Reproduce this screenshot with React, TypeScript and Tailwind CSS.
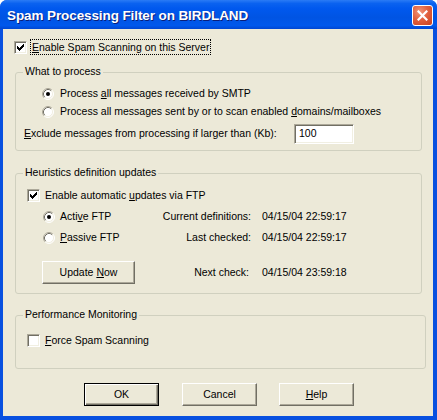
import React from "react";

const font = { fontFamily: '"Liberation Sans", Arial, sans-serif' };

function Check({ checked }: { checked?: boolean }) {
  return (
    <span className="flex items-center justify-center w-[13px] h-[13px] shrink-0 bg-white border border-t-[#ACA899] border-l-[#ACA899] border-r-white border-b-white shadow-[inset_1px_1px_0_#716F64,inset_-1px_-1px_0_#F1EFE2]">
      {checked && (
        <svg width="7" height="7" viewBox="0 0 7 7" shapeRendering="crispEdges">
          <path
            fill="#000"
            d="M6 0h1v1h-1z M5 1h2v1h-2z M0 2h1v1h-1z M4 2h3v1h-3z M0 3h2v1h-2z M3 3h3v1h-3z M0 4h5v1h-5z M1 5h3v1h-3z M2 6h1v1h-1z"
          />
        </svg>
      )}
    </span>
  );
}

function Radio({ checked }: { checked?: boolean }) {
  return (
    <svg width="12" height="12" viewBox="0 0 12 12" className="shrink-0">
      <circle cx="6" cy="6" r="5" fill="#fff" />
      <path d="M2.11 9.89 A5.5 5.5 0 0 1 9.89 2.11" stroke="#ACA899" strokeWidth="1" fill="none" />
      <path d="M2.82 9.18 A4.5 4.5 0 0 1 9.18 2.82" stroke="#716F64" strokeWidth="1" fill="none" />
      <path d="M9.89 2.11 A5.5 5.5 0 0 1 2.11 9.89" stroke="#fff" strokeWidth="1" fill="none" />
      <path d="M9.18 2.82 A4.5 4.5 0 0 1 2.82 9.18" stroke="#F1EFE2" strokeWidth="1" fill="none" />
      {checked && <circle cx="6" cy="6" r="2" fill="#000" />}
    </svg>
  );
}

function Group({ title, className, children }: { title: string; className: string; children: React.ReactNode }) {
  return (
    <div className={`relative ml-[12px] border border-[#D0D0BF] rounded-[3px] ${className}`}>
      <span className="absolute -top-[8px] left-[7px] px-[2px] leading-[13px] bg-[#ECE9D8]">{title}</span>
      {children}
    </div>
  );
}

function Btn({ children, def, className = "" }: { children: React.ReactNode; def?: boolean; className?: string }) {
  return (
    <button
      className={`w-[75px] h-[23px] flex items-center justify-center bg-[#ECE9D8] text-black ${
        def
          ? "border border-black shadow-[inset_1px_1px_0_#fff,inset_-1px_-1px_0_#716F64,inset_-2px_-2px_0_#ACA899]"
          : "border border-t-white border-l-white border-r-[#716F64] border-b-[#716F64] shadow-[inset_-1px_-1px_0_#ACA899]"
      } ${className}`}
    >
      {children}
    </button>
  );
}

export default function App() {
  return (
    <div className="w-[437px] h-[420px] bg-white" style={font}>
      <div className="w-full h-full flex flex-col bg-[#0850E0] rounded-t-[7px] overflow-hidden text-[10.5px] text-black">
        {/* title bar */}
        <div className="h-[29px] shrink-0 flex items-center bg-[linear-gradient(to_bottom,#2A7BF5_0%,#0A62F0_12%,#0058EE_30%,#0054E3_60%,#0058EC_88%,#0046D2_100%)]">
          <span className="ml-[7px] mt-[3px] text-white font-bold text-[13.5px] tracking-[-0.1px] [text-shadow:1px_1px_0_#0A1E7A]">
            Spam Processing Filter on BIRDLAND
          </span>
          <span className="ml-auto mr-[4px] mt-[2px] w-[21px] h-[21px] rounded-[3px] border border-white bg-[radial-gradient(circle_at_35%_30%,#F2967A_0%,#E2613F_45%,#C9401E_100%)] flex items-center justify-center">
            <svg width="11" height="11" viewBox="0 0 11 11">
              <path d="M1.5 1.5 L9.5 9.5 M9.5 1.5 L1.5 9.5" stroke="#fff" strokeWidth="2.2" strokeLinecap="square" />
            </svg>
          </span>
        </div>

        {/* body */}
        <div className="flex-1 ml-[3px] mr-[4px] mb-[4px] bg-[#ECE9D8] flex flex-col">
          <div className="mt-[10px] ml-[11px] h-[16px] flex items-center">
            <Check checked />
            <span className="ml-[3px] px-[1px] border border-dotted border-black leading-[14px]">
              <u>E</u>nable Spam Scanning on this Server
            </span>
          </div>

          <Group title="What to process" className="mt-[17px] w-[407px] h-[79px]">
            <div className="mt-[14px] ml-[26px] h-[13px] flex items-center gap-[6px]">
              <Radio checked />
              <span>
                Process <u>a</u>ll messages received by SMTP
              </span>
            </div>
            <div className="mt-[5px] ml-[26px] h-[13px] flex items-center gap-[6px]">
              <Radio />
              <span>
                Process all messages sent by or to scan enabled <u>d</u>omains/mailboxes
              </span>
            </div>
            <div className="mt-[6px] ml-[8px] flex items-center">
              <span className="w-[270px]">
                <u>E</u>xclude messages from processing if larger than (Kb):
              </span>
              <span className="w-[60px] h-[20px] pl-[4px] flex items-center bg-white border border-t-[#ACA899] border-l-[#ACA899] border-r-white border-b-white shadow-[inset_1px_1px_0_#716F64,inset_-1px_-1px_0_#F1EFE2]">
                100
              </span>
            </div>
          </Group>

          <Group title="Heuristics definition updates" className="mt-[22px] w-[407px] h-[121px]">
            <div className="mt-[15px] ml-[11px] h-[13px] flex items-center gap-[5px]">
              <Check checked />
              <span>
                Enable automatic <u>u</u>pdates via FTP
              </span>
            </div>
            <div className="mt-[8px] h-[13px] flex items-center">
              <div className="w-[235px] pl-[27px] flex items-center gap-[5px]">
                <Radio checked />
                <span>
                  Acti<u>v</u>e FTP
                </span>
                <span className="ml-auto">Current definitions:</span>
              </div>
              <span className="ml-[11px]">04/15/04 22:59:17</span>
            </div>
            <div className="mt-[8px] h-[13px] flex items-center">
              <div className="w-[235px] pl-[27px] flex items-center gap-[5px]">
                <Radio />
                <span>
                  <u>P</u>assive FTP
                </span>
                <span className="ml-auto">Last checked:</span>
              </div>
              <span className="ml-[11px]">04/15/04 22:59:17</span>
            </div>
            <div className="mt-[17px] h-[23px] flex items-center">
              <div className="w-[233px] pl-[26px] flex items-center">
                <Btn className="w-[93px]">
                  <span>
                    Update <u>N</u>ow
                  </span>
                </Btn>
                <span className="ml-auto">Next check:</span>
              </div>
              <span className="ml-[13px]">04/15/04 23:59:18</span>
            </div>
          </Group>

          <Group title="Performance Monitoring" className="mt-[21px] w-[411px] h-[54px]">
            <div className="mt-[18px] ml-[11px] h-[13px] flex items-center gap-[5px]">
              <Check />
              <span>
                <u>F</u>orce Spam Scanning
              </span>
            </div>
          </Group>

          <div className="mt-[14px] flex">
            <Btn def className="ml-[81px]">
              OK
            </Btn>
            <Btn className="ml-[23px]">Cancel</Btn>
            <Btn className="ml-[22px]">
              <span>
                <u>H</u>elp
              </span>
            </Btn>
          </div>
        </div>
      </div>
    </div>
  );
}
